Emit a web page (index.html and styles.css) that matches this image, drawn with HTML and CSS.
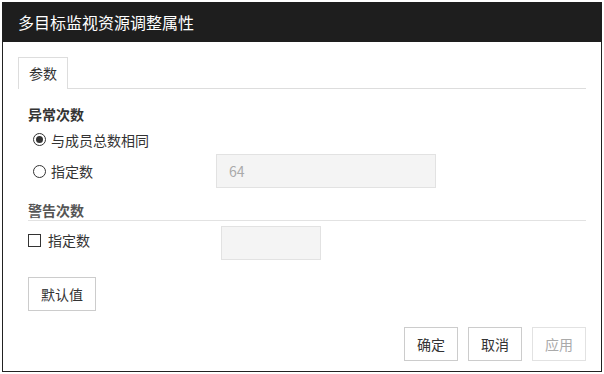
FILE: index.html
```html
<!DOCTYPE html>
<html lang="zh-CN">
<head>
  <meta charset="UTF-8" />
  <title>多目标监视资源调整属性</title>
  <link rel="stylesheet" href="styles.css">
</head>
<body>
  <div class="dialog">
    <div class="dialog-title">多目标监视资源调整属性</div>
    <div class="dialog-body">
      <div class="tabs">
        <div class="tab active">参数</div>
      </div>

      <div class="group">
        <div class="group-title">异常次数</div>
        <div class="row">
          <label class="opt"><span class="radio checked"></span>与成员总数相同</label>
        </div>
        <div class="row row-field">
          <label class="opt"><span class="radio"></span>指定数</label>
          <div class="field wide">64</div>
        </div>
      </div>

      <div class="group">
        <div class="group-title line">警告次数</div>
        <div class="row row-check">
          <label class="opt"><span class="check"></span>指定数</label>
          <div class="field short"></div>
        </div>
      </div>

      <button class="btn btn-default">默认值</button>

      <div class="footer">
        <button class="btn">确定</button>
        <button class="btn">取消</button>
        <button class="btn disabled">应用</button>
      </div>
    </div>
  </div>
</body>
</html>
```

FILE: styles.css
```css
* { margin: 0; padding: 0; box-sizing: border-box; }
body {
  background: #fff; color: #333;
  font-family: "Noto Sans CJK SC", "Noto Sans", sans-serif; font-size: 14px;
}

.dialog {
  margin: 2px 0 0 2px; width: 600px; height: 370px;
  border: 1px solid #222; border-top: 0; background: #fff;
  display: flex; flex-direction: column;
}
.dialog-title {
  height: 40px; background: #1e1e1e; color: #fff;
  font-size: 16px; line-height: 40px;
  margin: 0 -1px; padding-left: 16px;
}
.dialog-body { flex: 1; padding: 15px 15px 0 15px; display: flex; flex-direction: column; }

.tabs { border-bottom: 1px solid #ddd; display: flex; height: 32px; }
.tab {
  width: 50px; height: 32px; border: 1px solid #ddd; border-bottom: 0;
  text-align: center; line-height: 30px; background: #fff; margin-bottom: -1px;
}

.group { padding-left: 10px; }
.group-title { font-weight: bold; margin-top: 15px; line-height: 20px; color: #333; }
.group-title.line { color: #555; margin-top: 12px; border-bottom: 1px solid #e2e2e2; }

.row { display: flex; align-items: center; height: 29px; margin-top: 1px; }
.row-field { height: 34px; margin-top: 0; }
.row-check { height: 34px; margin-top: 5px; }
.opt { display: flex; align-items: center; width: 188px; padding-left: 5px; }
.row-check .opt { padding-left: 0; width: 193px; margin-bottom: 6px; }

.radio {
  width: 13px; height: 13px; border: 1px solid #333; border-radius: 50%;
  margin-right: 5px; position: relative;
}
.radio.checked::after {
  content: ""; position: absolute; left: 2px; top: 2px;
  width: 7px; height: 7px; border-radius: 50%; background: #333;
}
.check { width: 13px; height: 13px; border: 1px solid #333; margin-right: 7px; }

.field {
  height: 34px; background: #f4f4f4; border: 1px solid #e2e2e2;
  color: #aaa; line-height: 32px; padding-left: 12px;
}
.field.wide { width: 220px; }
.field.short { width: 100px; }

.btn {
  font-family: inherit; font-size: 14px; color: #333; background: #fff;
  border: 1px solid #ccc; height: 34px; width: 54px;
}
.btn-default { width: 68px; margin: 17px 0 0 10px; align-self: flex-start; }
.btn.disabled { color: #aaa; border-color: #e2e2e2; }

.footer { display: flex; justify-content: flex-end; gap: 10px; margin-top: 16px; }
```
